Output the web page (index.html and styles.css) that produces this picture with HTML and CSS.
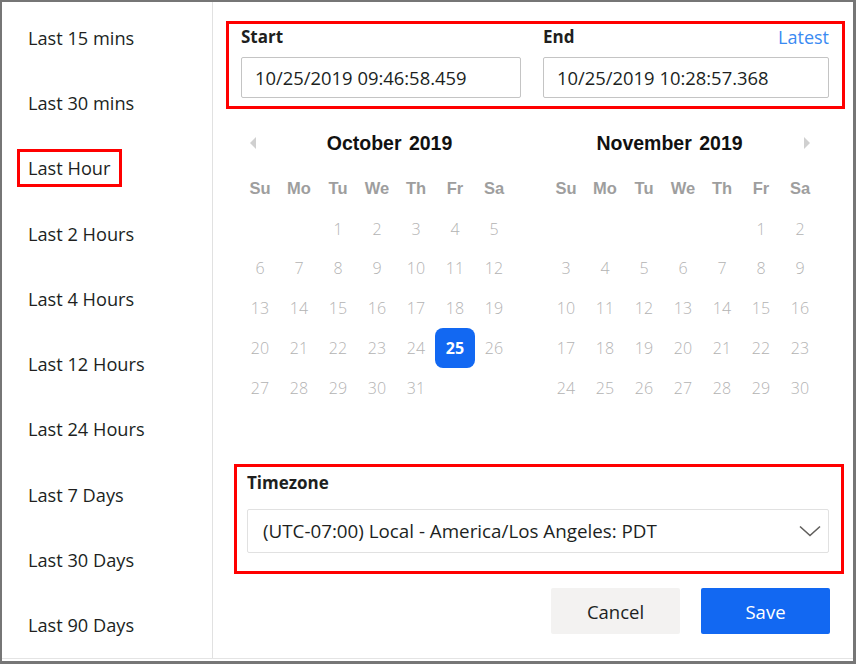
FILE: index.html
```html
<!DOCTYPE html>
<html>
<head>
<meta charset="utf-8">
<link rel="stylesheet" href="styles.css">
</head>
<body>
<div class="frame">
  <div class="inner">
    <ul class="presets">
      <li class="preset"><span>Last 15 mins</span></li>
      <li class="preset"><span>Last 30 mins</span></li>
      <li class="preset"><span class="marked">Last Hour</span></li>
      <li class="preset"><span>Last 2 Hours</span></li>
      <li class="preset"><span>Last 4 Hours</span></li>
      <li class="preset"><span>Last 12 Hours</span></li>
      <li class="preset"><span>Last 24 Hours</span></li>
      <li class="preset"><span>Last 7 Days</span></li>
      <li class="preset"><span>Last 30 Days</span></li>
      <li class="preset"><span>Last 90 Days</span></li>
    </ul>
    <div class="main">
      <div class="range box-red">
        <div class="field">
          <div class="label-row"><span class="label">Start</span></div>
          <div class="input">10/25/2019 09:46:58.459</div>
        </div>
        <div class="field">
          <div class="label-row"><span class="label">End</span><span class="link">Latest</span></div>
          <div class="input">10/25/2019 10:28:57.368</div>
        </div>
      </div>

      <div class="calendars">
        <div class="month month-left">
          <div class="month-head">
            <svg class="arrow" width="7" height="12" viewBox="0 0 7 12"><polygon points="6,0 0,6 6,12" fill="#d0d0d0"/></svg>
            <span class="month-title">October 2019</span>
          </div>
          <div class="grid">
            <span class="dow">Su</span><span class="dow">Mo</span><span class="dow">Tu</span><span class="dow">We</span><span class="dow">Th</span><span class="dow">Fr</span><span class="dow">Sa</span>
            <span></span><span></span><span class="d">1</span><span class="d">2</span><span class="d">3</span><span class="d">4</span><span class="d">5</span>
            <span class="d">6</span><span class="d">7</span><span class="d">8</span><span class="d">9</span><span class="d">10</span><span class="d">11</span><span class="d">12</span>
            <span class="d">13</span><span class="d">14</span><span class="d">15</span><span class="d">16</span><span class="d">17</span><span class="d">18</span><span class="d">19</span>
            <span class="d">20</span><span class="d">21</span><span class="d">22</span><span class="d">23</span><span class="d">24</span><span class="d"><b class="sel">25</b></span><span class="d">26</span>
            <span class="d">27</span><span class="d">28</span><span class="d">29</span><span class="d">30</span><span class="d">31</span><span></span><span></span>
          </div>
        </div>
        <div class="month month-right">
          <div class="month-head">
            <span class="month-title">November 2019</span>
            <svg class="arrow" width="7" height="12" viewBox="0 0 7 12"><polygon points="1,0 7,6 1,12" fill="#d0d0d0"/></svg>
          </div>
          <div class="grid">
            <span class="dow">Su</span><span class="dow">Mo</span><span class="dow">Tu</span><span class="dow">We</span><span class="dow">Th</span><span class="dow">Fr</span><span class="dow">Sa</span>
            <span></span><span></span><span></span><span></span><span></span><span class="d">1</span><span class="d">2</span>
            <span class="d">3</span><span class="d">4</span><span class="d">5</span><span class="d">6</span><span class="d">7</span><span class="d">8</span><span class="d">9</span>
            <span class="d">10</span><span class="d">11</span><span class="d">12</span><span class="d">13</span><span class="d">14</span><span class="d">15</span><span class="d">16</span>
            <span class="d">17</span><span class="d">18</span><span class="d">19</span><span class="d">20</span><span class="d">21</span><span class="d">22</span><span class="d">23</span>
            <span class="d">24</span><span class="d">25</span><span class="d">26</span><span class="d">27</span><span class="d">28</span><span class="d">29</span><span class="d">30</span>
          </div>
        </div>
      </div>

      <div class="tz box-red">
        <div class="label">Timezone</div>
        <div class="select">
          <span>(UTC-07:00) Local - America/Los Angeles: PDT</span>
          <svg class="chev" width="22" height="12" viewBox="0 0 22 12"><polyline points="1,1.5 11,10.5 21,1.5" fill="none" stroke="#605e5c" stroke-width="1.6"/></svg>
        </div>
      </div>

      <div class="actions">
        <button class="btn btn-cancel">Cancel</button>
        <button class="btn btn-save">Save</button>
      </div>
    </div>
  </div>
</div>
</body>
</html>
```

FILE: styles.css
```css
* { box-sizing: border-box; }
html, body { margin: 0; padding: 0; background: #fff; }
body { font-family: "Open Sans", "Noto Sans", sans-serif; color: #201f1e; }

.frame {
  width: 856px;
  height: 664px;
  border-style: solid;
  border-color: #767676;
  border-width: 2px 3px 3px 2px;
  padding-bottom: 2px;
  overflow: hidden;
}
.inner {
  display: flex;
  height: 657px;
  border-bottom: 1px solid #e4e4e4;
}

.presets {
  list-style: none;
  margin: 0;
  padding: 3px 0 0 0;
  width: 211px;
  border-right: 1px solid #e1e1e1;
  display: flex;
  flex-direction: column;
}
.preset {
  flex: 1;
  display: flex;
  align-items: center;
  padding-left: 26px;
  font-size: 18.2px;
}
.marked {
  border: 3px solid #ff0000;
  padding: 4px 9px 4px 8px;
  margin: -7px -12px -7px -11px;
}

.main {
  flex: 1;
  display: flex;
  flex-direction: column;
  padding: 19px 0 0 0;
}
.box-red { border: 3px solid #ff0000; }

.range {
  margin: 0 8px 0 13px;
  height: 88px;
  padding: 2px 13px 0 12px;
  display: grid;
  grid-template-columns: 280px 286px;
  column-gap: 22px;
}
.label-row {
  height: 22px;
  display: flex;
  justify-content: space-between;
  align-items: center;
  margin-bottom: 9px;
}
.label { font-weight: 700; font-size: 17px; line-height: 22px; }
.link { color: #3a8af2; font-size: 18px; }
.input {
  height: 41px;
  border: 1px solid #c4c4c4;
  border-radius: 2px;
  padding-left: 13px;
  display: flex;
  align-items: center;
  font-size: 18.4px;
}

.calendars {
  display: flex;
  margin: 22px 0 0 27px;
  height: 315px;
}
.month-left { width: 283px; }
.month-right { width: 284px; margin-left: 13px; }
.month-head {
  height: 24px;
  display: flex;
  align-items: center;
  margin-bottom: 14px;
}
.month-left .month-head { padding: 0 1px 0 10px; }
.month-right .month-head { width: 274px; }
.month-title {
  flex: 1;
  text-align: center;
  font-family: "Liberation Sans", Arial, sans-serif;
  font-weight: 700;
  font-size: 19.5px;
  word-spacing: 2px;
  color: #111;
}
.arrow { display: block; }
.grid {
  display: grid;
  grid-template-columns: repeat(7, 39px);
  grid-auto-rows: 39.75px;
  margin-left: 0.5px;
}
.month-right .grid { margin-left: 10.5px; }
.grid > span {
  display: flex;
  align-items: center;
  justify-content: center;
}
.dow {
  font-family: "Liberation Sans", Arial, sans-serif;
  font-weight: 700;
  font-size: 16.5px;
  color: #9e9e9e;
}
.d { font-size: 16px; color: #b3b3b3; font-weight: 300; }
.sel {
  width: 40px;
  height: 40px;
  flex: none;
  border-radius: 8px;
  background: #1268f2;
  color: #fff;
  font-weight: 700;
  display: flex;
  align-items: center;
  justify-content: center;
}

.tz {
  margin: 18px 9px 0 21px;
  height: 110px;
  padding: 5px 12px 0 10px;
}
.tz .label { margin-bottom: 15px; }
.select {
  height: 44px;
  border: 1px solid #e1e1e1;
  border-radius: 2px;
  padding: 0 7px 0 15px;
  display: flex;
  align-items: center;
  justify-content: space-between;
  font-size: 18.8px;
}

.actions {
  display: flex;
  justify-content: flex-end;
  gap: 21px;
  margin: 14px 23px 0 0;
}
.btn {
  width: 129px;
  height: 46px;
  border: none;
  border-radius: 2px;
  font-family: "Open Sans", "Noto Sans", sans-serif;
  font-size: 18.5px;
}
.btn-cancel { background: #f3f2f1; color: #201f1e; }
.btn-save { background: #1268f2; color: #fff; }
```
